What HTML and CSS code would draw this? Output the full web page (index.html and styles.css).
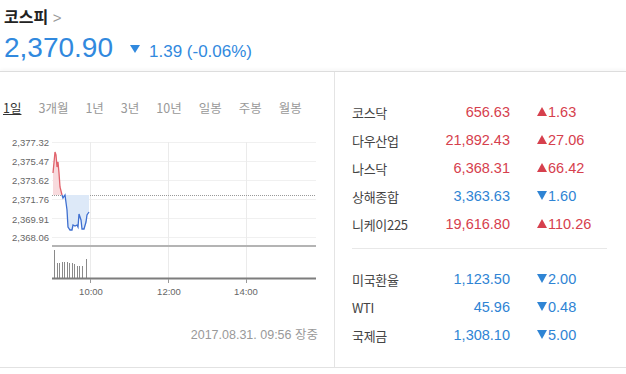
FILE: index.html
```html
<!DOCTYPE html>
<html lang="ko">
<head>
  <meta charset="UTF-8" />
  <title>코스피</title>
  <link rel="stylesheet" href="styles.css">
</head>
<body>
  <div class="head">
    <div class="title">코스피 <span class="chev">&gt;</span></div>
    <div class="price-line">
      <span class="price">2,370.90</span>
      <span class="tri-down"></span>
      <span class="diff">1.39 (-0.06%)</span>
    </div>
  </div>

  <div class="board">
    <div class="chart-panel">
      <ul class="tabs">
        <li class="on">1일</li>
        <li>3개월</li>
        <li>1년</li>
        <li>3년</li>
        <li>10년</li>
        <li>일봉</li>
        <li>주봉</li>
        <li>월봉</li>
      </ul>

      <svg class="chart" width="334" height="170" viewBox="0 130 334 170">
        <!-- grid -->
        <g stroke="#f0f0f0" stroke-width="1">
          <line x1="52" y1="142.5" x2="316" y2="142.5" />
          <line x1="52" y1="161.5" x2="316" y2="161.5" />
          <line x1="52" y1="180.5" x2="316" y2="180.5" />
          <line x1="52" y1="199.5" x2="316" y2="199.5" />
          <line x1="52" y1="218.5" x2="316" y2="218.5" />
          <line x1="52" y1="237.5" x2="316" y2="237.5" />
        </g>
        <g stroke="#ebebeb" stroke-width="1">
          <line x1="90.5" y1="142" x2="90.5" y2="278" />
          <line x1="168.5" y1="142" x2="168.5" y2="278" />
          <line x1="246.5" y1="142" x2="246.5" y2="278" />
        </g>

        <!-- y labels -->
        <g class="ylab" text-anchor="end">
          <text x="49" y="146">2,377.32</text>
          <text x="49" y="165">2,375.47</text>
          <text x="49" y="184">2,373.62</text>
          <text x="49" y="203">2,371.76</text>
          <text x="49" y="223">2,369.91</text>
          <text x="49" y="241">2,368.06</text>
        </g>

        <!-- previous close -->
        <line x1="52" y1="195.5" x2="316" y2="195.5" stroke="#999" stroke-dasharray="1,1" />

        <!-- areas -->
        <polygon fill="#f8dadd" points="53,195 53,173 55,152 56,155 57,167 58,162 59,173 60,187 62,195" />
        <polygon fill="#dde9f8" points="62,195 63,198 65,195 67,210 68,227 70,230 72,230 73,225 75,226 77,225 78,227 79,214 81,220 82,229 84,229 86,222 87,215 89,212 89,195" />

        <!-- price line -->
        <polyline fill="none" stroke="#e0626b" stroke-width="1.3" points="53,173 55,152 56,155 57,167 58,162 59,173 60,187 62,195" />
        <polyline fill="none" stroke="#3e6fd0" stroke-width="1.3" points="62,195 63,198 65,195 67,210 68,227 70,230 72,230 73,225 75,226 77,225 78,227 79,214 81,220 82,229 84,229 86,222 87,215 89,212" />

        <!-- price axis -->
        <line x1="52" y1="246" x2="316" y2="246" stroke="#b4b4b4" stroke-width="2" />

        <!-- volume -->
        <g stroke="#8a8a8a" stroke-width="1">
          <line x1="54.5" y1="250" x2="54.5" y2="278" />
          <line x1="57.5" y1="263" x2="57.5" y2="278" />
          <line x1="59.5" y1="263" x2="59.5" y2="278" />
          <line x1="62.5" y1="262" x2="62.5" y2="278" />
          <line x1="64.5" y1="262" x2="64.5" y2="278" />
          <line x1="67.5" y1="262" x2="67.5" y2="278" />
          <line x1="69.5" y1="263" x2="69.5" y2="278" />
          <line x1="72.5" y1="263" x2="72.5" y2="278" />
          <line x1="74.5" y1="264" x2="74.5" y2="278" />
          <line x1="77.5" y1="266" x2="77.5" y2="278" />
          <line x1="79.5" y1="266" x2="79.5" y2="278" />
          <line x1="82.5" y1="266" x2="82.5" y2="278" />
          <line x1="86.5" y1="259" x2="86.5" y2="278" />
        </g>
        <line x1="52" y1="278.5" x2="316" y2="278.5" stroke="#7d7d7d" stroke-width="2" />
        <g stroke="#999" stroke-width="1">
          <line x1="90.5" y1="279" x2="90.5" y2="283" />
          <line x1="168.5" y1="279" x2="168.5" y2="283" />
          <line x1="246.5" y1="279" x2="246.5" y2="283" />
        </g>

        <!-- time labels -->
        <g class="xlab" text-anchor="middle">
          <text x="91" y="295">10:00</text>
          <text x="169" y="295">12:00</text>
          <text x="246" y="295">14:00</text>
        </g>
      </svg>

      <div class="stamp">2017.08.31. 09:56 장중</div>
    </div>

    <div class="world">
      <div class="group">
        <div class="row up"><span class="name">코스닥</span><span class="val">656.63</span><span class="chg"><i></i>1.63</span></div>
        <div class="row up"><span class="name">다우산업</span><span class="val">21,892.43</span><span class="chg"><i></i>27.06</span></div>
        <div class="row up"><span class="name">나스닥</span><span class="val">6,368.31</span><span class="chg"><i></i>66.42</span></div>
        <div class="row down"><span class="name">상해종합</span><span class="val">3,363.63</span><span class="chg"><i></i>1.60</span></div>
        <div class="row up"><span class="name">니케이225</span><span class="val">19,616.80</span><span class="chg"><i></i>110.26</span></div>
      </div>
      <div class="group second">
        <div class="row down"><span class="name">미국환율</span><span class="val">1,123.50</span><span class="chg"><i></i>2.00</span></div>
        <div class="row down"><span class="name">WTI</span><span class="val">45.96</span><span class="chg"><i></i>0.48</span></div>
        <div class="row down"><span class="name">국제금</span><span class="val">1,308.10</span><span class="chg"><i></i>5.00</span></div>
      </div>
    </div>
  </div>
</body>
</html>
```

FILE: styles.css
```css
body {
  margin: 0;
  width: 626px;
  font-family: "Liberation Sans", "Noto Sans CJK KR", sans-serif;
  color: #333;
  background: #fff;
}

.head {
  height: 71px;
  padding-left: 4px;
  box-sizing: border-box;
}

.title {
  padding-top: 5px;
  font-family: "Noto Sans CJK KR", sans-serif;
  font-size: 16px;
  font-weight: bold;
  line-height: 22px;
  color: #222;
}

.chev {
  font-family: "Liberation Sans", sans-serif;
  font-size: 15px;
  font-weight: normal;
  color: #999;
}

.price-line {
  display: flex;
  align-items: baseline;
  margin-top: 2px;
  line-height: 34px;
  color: #3189de;
}

.price {
  font-size: 28px;
}

.tri-down {
  display: inline-block;
  width: 0;
  height: 0;
  margin: 0 9px 0 17px;
  border-left: 5px solid transparent;
  border-right: 5px solid transparent;
  border-top: 8px solid #3189de;
  position: relative;
  top: -4px;
}

.diff {
  font-size: 17px;
}

.board {
  display: flex;
  height: 297px;
  border-top: 1px solid #ddd;
  border-bottom: 1px solid #e2e2e2;
  box-shadow: 0 -2px 3px rgba(0, 0, 0, 0.03);
  box-sizing: border-box;
}

.chart-panel {
  width: 334px;
  border-right: 1px solid #e4e4e4;
}

.tabs {
  display: flex;
  gap: 17px;
  margin: 0;
  padding: 28px 0 0 3px;
  list-style: none;
  font-family: "Noto Sans CJK KR", sans-serif;
  font-size: 12.5px;
  line-height: 16px;
  color: #999;
}

.tabs .on {
  color: #333;
  text-decoration: underline;
}

.chart {
  display: block;
  margin-top: 14px;
}

.ylab text,
.xlab text {
  font-family: "Liberation Sans", sans-serif;
  font-size: 9.5px;
  fill: #666;
}

.stamp {
  margin-top: 27px;
  padding-right: 16px;
  text-align: right;
  font-size: 12.5px;
  line-height: 16px;
  color: #999;
}

.world {
  flex: 1;
  padding: 26px 19px 0 17px;
}

.group {
  padding-bottom: 10px;
  border-bottom: 1px solid #e8e8e8;
}

.group.second {
  border-bottom: none;
  padding-top: 16px;
}

.row {
  display: grid;
  grid-template-columns: 80px 78px 1fr;
  height: 28px;
  align-items: center;
  font-size: 14.5px;
  white-space: nowrap;
}

.name {
  font-family: "Noto Sans CJK KR", sans-serif;
  font-size: 13px;
  color: #444;
  letter-spacing: -0.3px;
}

.val {
  text-align: right;
}

.chg {
  padding-left: 27px;
}

.chg i {
  display: inline-block;
  width: 0;
  height: 0;
  margin-right: 1px;
  border-left: 5px solid transparent;
  border-right: 5px solid transparent;
  vertical-align: 1px;
}

.up .val,
.up .chg {
  color: #d6404d;
}

.up .chg i {
  border-bottom: 9px solid #d6404d;
}

.down .val,
.down .chg {
  color: #2f84d4;
}

.down .chg i {
  border-top: 9px solid #2f84d4;
}
```
